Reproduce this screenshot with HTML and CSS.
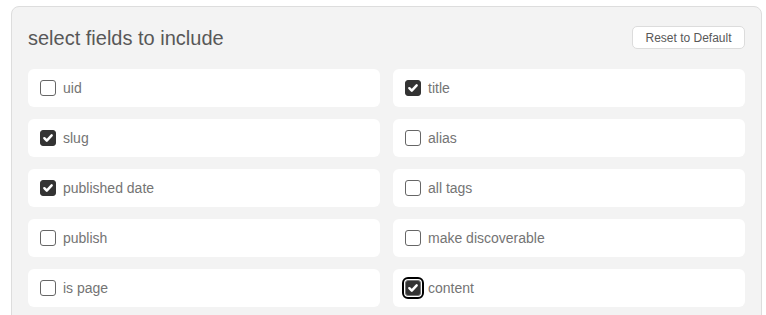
FILE: index.html
```html
<!DOCTYPE html>
<html lang="en">
<head>
  <meta charset="UTF-8" />
  <title>Select fields</title>
  <link rel="stylesheet" href="styles.css">
</head>
<body>
  <div class="panel">
    <div class="panel-header">
      <h2>select fields to include</h2>
      <button class="reset-btn">Reset to Default</button>
    </div>

    <div class="field-grid">
      <label class="field"><span class="box"></span>uid</label>
      <label class="field"><span class="box checked"><svg viewBox="0 0 16 16"><path d="M3.8 8.2l2.8 2.8L12.2 5" /></svg></span>title</label>
      <label class="field"><span class="box checked"><svg viewBox="0 0 16 16"><path d="M3.8 8.2l2.8 2.8L12.2 5" /></svg></span>slug</label>
      <label class="field"><span class="box"></span>alias</label>
      <label class="field"><span class="box checked"><svg viewBox="0 0 16 16"><path d="M3.8 8.2l2.8 2.8L12.2 5" /></svg></span>published date</label>
      <label class="field"><span class="box"></span>all tags</label>
      <label class="field"><span class="box"></span>publish</label>
      <label class="field"><span class="box"></span>make discoverable</label>
      <label class="field"><span class="box"></span>is page</label>
      <label class="field"><span class="box checked focused"><svg viewBox="0 0 16 16"><path d="M3.8 8.2l2.8 2.8L12.2 5" /></svg></span>content</label>
    </div>
  </div>
</body>
</html>
```

FILE: styles.css
```css
* {
  box-sizing: border-box;
}

body {
  margin: 0;
  font-family: 'Liberation Sans', Arial, sans-serif;
  background: #ffffff;
  overflow: hidden;
}

.panel {
  width: 751px;
  margin: 6px 0 0 11px;
  padding: 16px 16px 20px;
  background: #f3f3f3;
  border: 1px solid #dddddd;
  border-radius: 8px;
}

.panel-header {
  display: flex;
  align-items: center;
  justify-content: space-between;
  height: 30px;
  margin-bottom: 16px;
}

.panel-header h2 {
  margin: 0;
  font-size: 20px;
  font-weight: normal;
  color: #585858;
}

.reset-btn {
  height: 23px;
  width: 113px;
  padding: 0;
  font-family: inherit;
  font-size: 12px;
  color: #585858;
  background: #ffffff;
  border: 1px solid #dcdcdc;
  border-radius: 5px;
  margin-top: -1px;
}

.field-grid {
  display: grid;
  grid-template-columns: 352px 352px;
  column-gap: 13px;
  row-gap: 12px;
}

.field {
  display: flex;
  align-items: center;
  gap: 7px;
  height: 38px;
  padding: 0 12px;
  background: #ffffff;
  border-radius: 6px;
  font-size: 14px;
  color: #747474;
}

.box {
  width: 16px;
  height: 16px;
  border: 1.5px solid #666666;
  border-radius: 3px;
  display: flex;
  align-items: center;
  justify-content: center;
  flex-shrink: 0;
}

.box.checked {
  background: #333333;
  border-color: #333333;
}

.box svg {
  width: 14px;
  height: 14px;
}

.box svg path {
  fill: none;
  stroke: #ffffff;
  stroke-width: 2.8;
  stroke-linecap: round;
  stroke-linejoin: round;
}

.box.focused {
  outline: 2px solid #000000;
  outline-offset: 1px;
  border-color: #777777;
}
```
